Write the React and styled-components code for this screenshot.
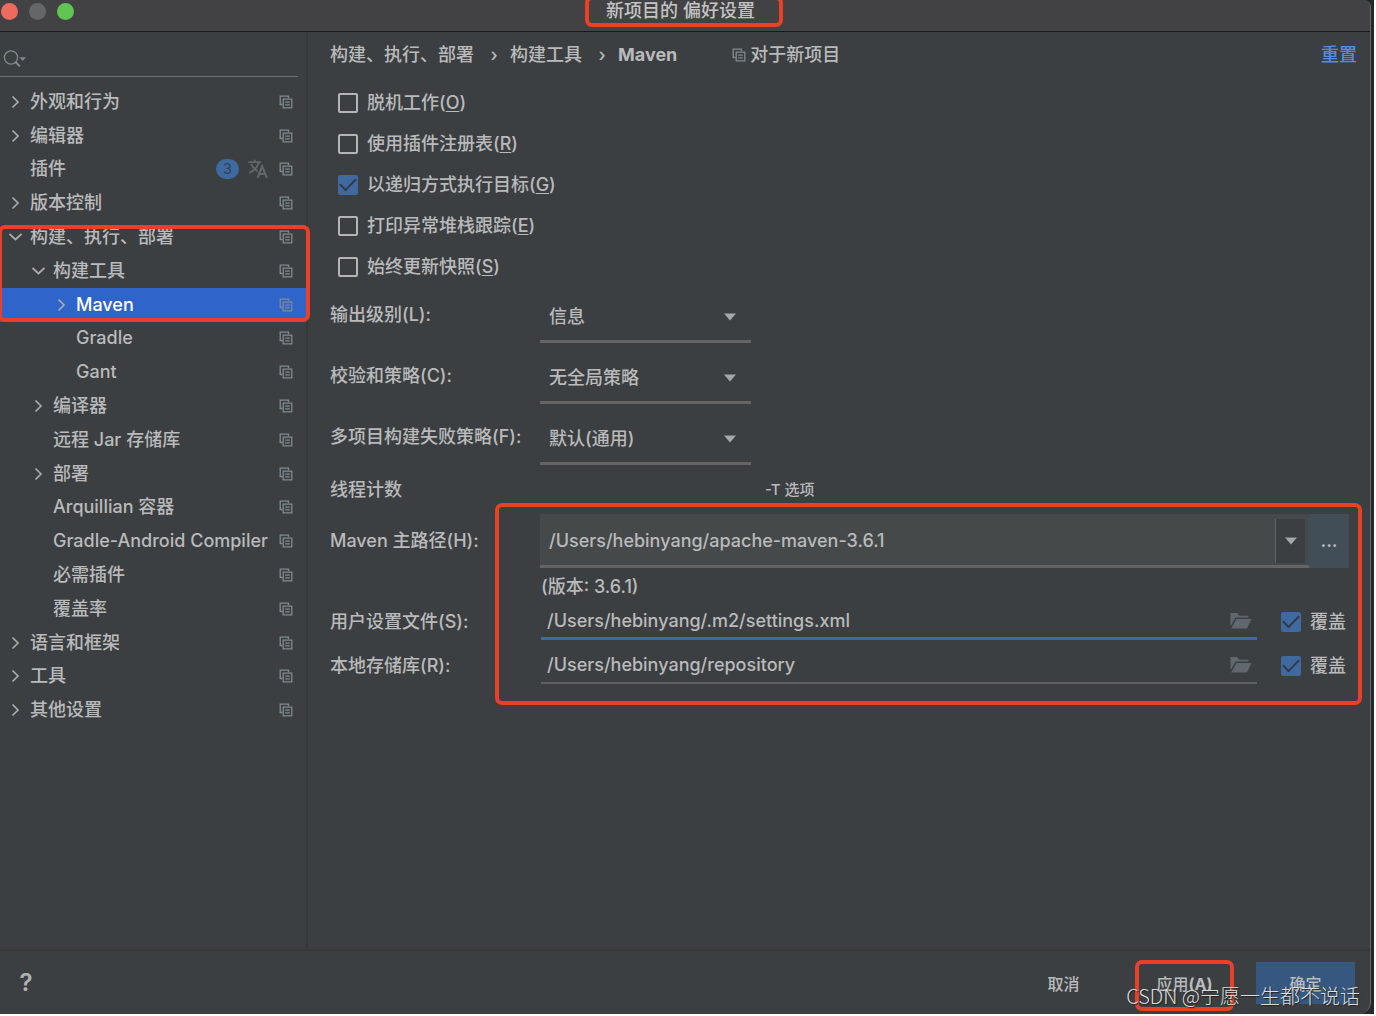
import { createGlobalStyle, styled, css } from 'styled-components'

const treeItems = [
  { label: '外观和行为', level: 0, arrow: 'right' },
  { label: '编辑器', level: 0, arrow: 'right' },
  { label: '插件', level: 0, badge: 3 },
  { label: '版本控制', level: 0, arrow: 'right' },
  { label: '构建、执行、部署', level: 0, arrow: 'down' },
  { label: '构建工具', level: 1, arrow: 'down' },
  { label: 'Maven', level: 2, arrow: 'right', selected: true },
  { label: 'Gradle', level: 2 },
  { label: 'Gant', level: 2 },
  { label: '编译器', level: 1, arrow: 'right' },
  { label: '远程 Jar 存储库', level: 1 },
  { label: '部署', level: 1, arrow: 'right' },
  { label: 'Arquillian 容器', level: 1 },
  { label: 'Gradle-Android Compiler', level: 1 },
  { label: '必需插件', level: 1 },
  { label: '覆盖率', level: 1 },
  { label: '语言和框架', level: 0, arrow: 'right' },
  { label: '工具', level: 0, arrow: 'right' },
  { label: '其他设置', level: 0, arrow: 'right' },
]

const options = [
  { id: 'offline', label: '脱机工作', mnemonic: 'O' },
  { id: 'registry', label: '使用插件注册表', mnemonic: 'R' },
  { id: 'recursive', label: '以递归方式执行目标', mnemonic: 'G', checked: true },
  { id: 'stacktrace', label: '打印异常堆栈跟踪', mnemonic: 'E' },
  { id: 'snapshots', label: '始终更新快照', mnemonic: 'S' },
]

const selects = [
  { id: 'level', label: '输出级别(L):', value: '信息' },
  { id: 'checksum', label: '校验和策略(C):', value: '无全局策略' },
  { id: 'failure', label: '多项目构建失败策略(F):', value: '默认(通用)' },
]

const CopyIcon = () => (
  <svg width="14" height="14" viewBox="0 0 14 14" fill="none" stroke="currentColor" aria-hidden="true">
    <path d="M3.5 9.5H1.2V1.2H9.5V3.2" strokeWidth="1.3" />
    <path d="M4.2 4.2H12.8V12.8H4.2Z" strokeWidth="1.3" />
    <path d="M6.2 7.2H10.8M6.2 9.8H10.8" strokeWidth="1.2" />
  </svg>
)

const Chevron = ({ direction }) => (
  <svg width="14" height="14" viewBox="0 0 14 14" fill="none" stroke="#a9abad" strokeWidth="1.7" aria-hidden="true">
    <path d={direction === 'down' ? 'M1.5 4L7.5 9.5L13.5 4' : 'M4.5 1.5L10 7L4.5 12.5'} />
  </svg>
)

const Triangle = () => (
  <svg width="14" height="8" viewBox="0 0 14 8" aria-hidden="true">
    <path d="M1 0.5H13L7 7.5Z" fill="#a4a8aa" />
  </svg>
)

const FolderIcon = () => (
  <svg width="22" height="18" viewBox="0 0 22 18" fill="#5f686c" aria-hidden="true">
    <path d="M0.5 1H7L9.5 3.8H18.5V5.6H5.6L0.5 14.2Z" />
    <path d="M6.4 7H21.5L17 16.4H1.2Z" />
  </svg>
)

const TranslateIcon = () => (
  <svg width="20" height="20" viewBox="0 0 20 20" fill="none" stroke="#63676a" strokeWidth="1.8" aria-hidden="true">
    <path d="M0.5 3.2H13M6.7 0.8V3.2M10.8 3.4C9.8 7.2 6.6 11.2 1.2 14M3 5C4.6 8.2 7 10.6 9.6 12.4" />
    <path d="M9.6 18.8L14.2 7.4L18.8 18.8M11 15H17.4" strokeWidth="2.1" />
  </svg>
)

const SearchIcon = () => (
  <svg width="24" height="18" viewBox="0 0 24 18" aria-hidden="true">
    <circle cx="8" cy="7.5" r="6.6" fill="none" stroke="#7c8b92" strokeWidth="1.3" />
    <path d="M12.4 12L17 16.4" stroke="#7c8b92" strokeWidth="2" />
    <path d="M16.5 7.2H23L19.7 11Z" fill="#7c8b92" />
  </svg>
)

const App = () => {
  return (
    <>
      <GlobalStyle />
      <Desktop>
        <Window>
          <TitleBar>
            <Lights>
              <Light $color="#ed6a5e" aria-label="关闭" />
              <Light $color="#656668" aria-label="最小化" />
              <Light $color="#61c554" aria-label="缩放" />
            </Lights>
            <Title>
              新项目的 偏好设置
              <TitleMark />
            </Title>
          </TitleBar>

          <Body>
            <Sidebar>
              <Search>
                <SearchIcon />
                <SearchInput type="text" aria-label="搜索" />
              </Search>
              <Tree>
                {treeItems.map((item, i) => (
                  <TreeItem key={item.label} style={{ gridRow: i + 1 }}>
                    <TreeButton type="button" $level={item.level} $selected={item.selected}>
                      <ArrowSlot>{item.arrow && <Chevron direction={item.arrow} />}</ArrowSlot>
                      <TreeLabel>{item.label}</TreeLabel>
                      {item.badge && (
                        <>
                          <Badge>{item.badge}</Badge>
                          <TranslateIcon />
                        </>
                      )}
                      <CopyIcon />
                    </TreeButton>
                  </TreeItem>
                ))}
                <TreeMark aria-hidden="true" />
              </Tree>
            </Sidebar>

            <Main>
              <Breadcrumb>
                <span>构建、执行、部署</span>
                <Separator>›</Separator>
                <span>构建工具</span>
                <Separator>›</Separator>
                <strong>Maven</strong>
                <Scope>
                  <CopyIcon />
                  <span>对于新项目</span>
                </Scope>
                <Reset href="#reset">重置</Reset>
              </Breadcrumb>

              <Options>
                {options.map((option) => (
                  <CheckLabel key={option.id}>
                    <Checkbox type="checkbox" defaultChecked={option.checked} />
                    <span>
                      {option.label}(<u>{option.mnemonic}</u>)
                    </span>
                  </CheckLabel>
                ))}
              </Options>

              {selects.map((field) => (
                <SelectRow key={field.id}>
                  <label htmlFor={field.id}>{field.label}</label>
                  <SelectBox>
                    <Select id={field.id}>
                      <option>{field.value}</option>
                    </Select>
                    <Triangle />
                  </SelectBox>
                </SelectRow>
              ))}

              <ThreadRow>
                <label htmlFor="threads">线程计数</label>
                <ThreadInput id="threads" type="text" />
                <Hint>-T 选项</Hint>
              </ThreadRow>

              <Paths>
                <HomeRow>
                  <label htmlFor="home">Maven 主路径(H):</label>
                  <Combo>
                    <ComboInput id="home" type="text" defaultValue="/Users/hebinyang/apache-maven-3.6.1" />
                    <ComboButton type="button" aria-label="展开">
                      <Triangle />
                    </ComboButton>
                  </Combo>
                  <BrowseButton type="button">...</BrowseButton>
                </HomeRow>
                <Version>(版本: 3.6.1)</Version>
                <FileRow>
                  <label htmlFor="settings">用户设置文件(S):</label>
                  <FileField $active>
                    <FileInput id="settings" type="text" defaultValue="/Users/hebinyang/.m2/settings.xml" />
                    <FolderIcon />
                  </FileField>
                  <CheckLabel>
                    <Checkbox type="checkbox" defaultChecked />
                    <span>覆盖</span>
                  </CheckLabel>
                </FileRow>
                <FileRow>
                  <label htmlFor="repository">本地存储库(R):</label>
                  <FileField>
                    <FileInput id="repository" type="text" defaultValue="/Users/hebinyang/repository" />
                    <FolderIcon />
                  </FileField>
                  <CheckLabel>
                    <Checkbox type="checkbox" defaultChecked />
                    <span>覆盖</span>
                  </CheckLabel>
                </FileRow>
                <PathsMark />
              </Paths>
            </Main>
          </Body>

          <Footer>
            <Help type="button" aria-label="帮助">?</Help>
            <FooterButton type="button">取消</FooterButton>
            <FooterButton type="button">
              应用<b>(A)</b>
              <ApplyMark />
            </FooterButton>
            <FooterButton type="button" $primary>确定</FooterButton>
          </Footer>
        </Window>
        <Watermark>CSDN @宁愿一生都不说话</Watermark>
      </Desktop>
    </>
  )
}

const GlobalStyle = createGlobalStyle`
  * {
    box-sizing: border-box;
  }

  body {
    margin: 0;
    background: #fff;
    color: #b9babb;
    font: 500 18px/24px Inter, "Noto Sans CJK SC", sans-serif;
  }

  button, input, select {
    margin: 0;
    padding: 0;
    border: none;
    border-radius: 0;
    outline: none;
    background: none;
    color: inherit;
    font: inherit;
  }

  svg {
    flex: none;
  }
`

const Desktop = styled.div`
  position: relative;
  display: flex;
  min-height: calc(100vh - 2px);
  margin-right: 2px;
  padding-right: 3px;
  background: #25272b;
`

const Window = styled.div`
  flex: 1;
  display: flex;
  flex-direction: column;
  min-width: 0;
  overflow: hidden;
  background: #3c3f41;
  border-right: 1px solid #66696b;
  border-radius: 0 8px 12px 0;
`

const TitleBar = styled.header`
  display: grid;
  grid-template-columns: 1fr auto 1fr;
  height: 32px;
  padding: 0 9px 9px 0;
  align-items: center;
  background: #424244;
  border-bottom: 1px solid #191a1b;
`

const Lights = styled.div`
  display: flex;
  gap: 11px;
  padding-left: 1px;
`

const Light = styled.button`
  width: 17px;
  height: 17px;
  border-radius: 50%;
  background: ${({ $color }) => $color};
`

const Title = styled.div`
  position: relative;
  line-height: 22px;
  color: #c3c3c4;
`

/* red annotation frames drawn over the dialog */
const mark = css`
  border: 4px solid #ea4025;
  border-radius: 7px;
  pointer-events: none;
`

const TitleMark = styled.span`
  ${mark}
  position: absolute;
  inset: -4px -28px -5px -21px;
`

const Body = styled.div`
  flex: 1;
  display: flex;
`

const Sidebar = styled.aside`
  flex: none;
  width: 308px;
  border-right: 2px solid #373939;
`

const Search = styled.div`
  display: flex;
  align-items: center;
  height: 45px;
  margin-right: 8px;
  padding: 10px 0 0 3px;
  border-bottom: 1px solid #6b6c6d;
`

const SearchInput = styled.input`
  flex: 1;
  min-width: 0;
`

const Tree = styled.ul`
  display: grid;
  grid-template-rows: repeat(19, 1fr);
  height: 642px;
  margin: 8px 0 0;
  padding: 0;
  list-style: none;
`

const TreeItem = styled.li`
  grid-column: 1;
  display: flex;
`

const TreeButton = styled.button`
  flex: 1;
  display: flex;
  align-items: center;
  min-width: 0;
  padding: 0 13px 0 ${({ $level }) => 8 + $level * 23}px;
  text-align: left;
  color: #7f8b91;
  background: ${({ $selected }) => ($selected ? '#2f65ca' : 'none')};

  span {
    color: ${({ $selected }) => ($selected ? '#fff' : '#b9babb')};
  }
`

const ArrowSlot = styled.span`
  display: flex;
  width: 22px;
`

const TreeLabel = styled.span`
  flex: 1;
  white-space: nowrap;
`

const Badge = styled.b`
  width: 23px;
  height: 20px;
  margin-right: 9px;
  border-radius: 10px;
  background: #3f6aa0;
  color: #2f4257;
  font-size: 15px;
  font-weight: 400;
  line-height: 20px;
  text-align: center;

  & + svg {
    margin-right: 11px;
  }
`

const TreeMark = styled.li`
  ${mark}
  grid-column: 1;
  grid-row: 5 / 8;
  z-index: 1;
  margin: 5px -4px 0 -2px;
`

const Main = styled.main`
  flex: 1;
  min-width: 0;
  padding: 11px 13px 0 22px;
`

const Breadcrumb = styled.nav`
  display: flex;
  align-items: center;
  height: 24px;
`

const Separator = styled.span`
  width: 36px;
  padding-left: 4px;
  text-align: center;
`

const Scope = styled.span`
  display: flex;
  align-items: center;
  gap: 4px;
  margin-left: 55px;

  svg {
    color: #7f8b91;
  }
`

const Reset = styled.a`
  margin-left: auto;
  color: #4f8fe6;
  text-decoration: none;
`

const Options = styled.div`
  display: grid;
  justify-items: start;
  gap: 17px;
  padding: 24px 0 7px 8px;
`

const CheckLabel = styled.label`
  display: flex;
  align-items: center;
  gap: 9px;

  u {
    text-underline-offset: 2px;
  }
`

const Checkbox = styled.input`
  appearance: none;
  display: grid;
  place-items: center;
  width: 20px;
  height: 20px;
  border: 2px solid #b4b5b6;
  border-radius: 2px;

  &:checked {
    border: none;
    background: #4069a0;
  }

  &:checked::after {
    content: '';
    width: 14px;
    height: 7px;
    margin-bottom: 6px;
    border: solid #2f3a48;
    border-width: 0 0 2px 2px;
    transform: rotate(-45deg);
  }
`

const fieldRow = css`
  display: grid;
  grid-template-columns: 210px 1fr;
  align-items: center;
`

const SelectRow = styled.div`
  ${fieldRow}
  height: 61px;

  label {
    padding-bottom: 4px;
  }
`

const SelectBox = styled.div`
  display: flex;
  align-items: center;
  width: 211px;
  height: 52px;
  padding: 3px 14px 0 0;
  border-bottom: 3px solid #646464;
`

const Select = styled.select`
  appearance: none;
  flex: 1;
  min-width: 0;
  height: 100%;
  padding-left: 9px;
`

const ThreadRow = styled.div`
  ${fieldRow}
  grid-template-columns: 210px 211px 1fr;
  height: 41px;
`

const ThreadInput = styled.input`
  width: 100%;
`

const Hint = styled.span`
  padding-left: 14px;
  font-size: 15px;
`

const Paths = styled.section`
  position: relative;
  padding: 4px 8px 0 0;
`

const PathsMark = styled.span`
  ${mark}
  position: absolute;
  inset: -7px -5px -17px 165px;
`

const HomeRow = styled.div`
  ${fieldRow}
  grid-template-columns: 210px 1fr 40px;
  height: 54px;
`

const Combo = styled.div`
  display: flex;
  height: 54px;
  padding: 5px 4px 2px 0;
  background: #45494a;
  border-bottom: 3px solid #646464;
`

const ComboInput = styled.input`
  flex: 1;
  min-width: 0;
  padding-left: 9px;
`

const ComboButton = styled.button`
  display: grid;
  place-items: center;
  width: 30px;
  background: #3c3f41;
  border-left: 1px solid #646464;
`

const BrowseButton = styled.button`
  height: 54px;
  background: #414d57;
  font-weight: 600;
`

const Version = styled.div`
  height: 32px;
  padding: 7px 0 0 211px;
`

const FileRow = styled.div`
  ${fieldRow}
  grid-template-columns: 211px 1fr auto;
  height: 44px;

  ${CheckLabel} {
    padding: 0 3px 0 24px;
  }
`

const FileField = styled.div`
  display: flex;
  align-items: center;
  height: 36px;
  padding: 0 5px 0 6px;
  border-bottom: ${({ $active }) => ($active ? '3px solid #4069a0' : '2px solid #5e6062')};
`

const FileInput = styled.input`
  flex: 1;
  min-width: 0;
`

const Footer = styled.footer`
  display: flex;
  align-items: center;
  height: 65px;
  padding: 0 15px 0 13px;
  border-top: 2px solid #373939;
`

const Help = styled.button`
  width: 26px;
  margin-right: auto;
  color: #b0b1b2;
  font-size: 24px;
  font-weight: 600;
`

const FooterButton = styled.button`
  position: relative;
  min-width: 99px;
  height: 42px;
  margin-left: 22px;
  padding-top: 2px;
  font-size: 16px;
  background: ${({ $primary }) => ($primary ? '#365880' : 'none')};
`

const ApplyMark = styled.span`
  ${mark}
  position: absolute;
  inset: -2px 0 -7px;
`

const Watermark = styled.div`
  position: absolute;
  right: 14px;
  bottom: 4px;
  color: #dcdcdc;
  font-family: "Noto Sans CJK SC", sans-serif;
  font-size: 20px;
  font-weight: 300;
  line-height: 28px;
  text-shadow: 1px 1px 1px #222;
`

export default App
